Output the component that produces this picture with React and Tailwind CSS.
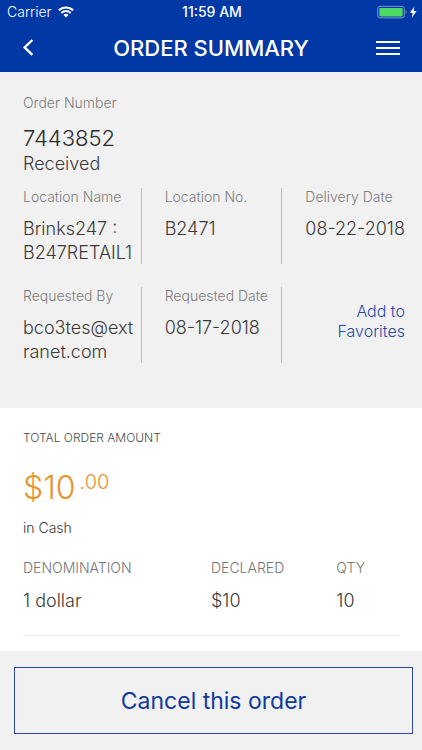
import React from "react";

function StatusBar() {
  return (
    <div className="grid h-6 grid-cols-3 items-center pl-[7px] pr-[5px] text-sm">
      <div className="flex items-center gap-1.5">
        <span className="font-light">Carrier</span>
        <svg width="16" height="12" viewBox="0 0 16 12" fill="none" stroke="currentColor" strokeWidth="2" aria-label="Wi-Fi">
          <path d="M0.8 4.4a10.2 10.2 0 0 1 14.4 0" />
          <path d="M3.3 7a6.7 6.7 0 0 1 9.4 0" />
          <path d="M8 11.6 5.5 9a3.6 3.6 0 0 1 5 0Z" fill="currentColor" stroke="none" />
        </svg>
      </div>
      <time className="whitespace-nowrap text-center font-medium">11:59 AM</time>
      <svg className="justify-self-end" width="40" height="14" viewBox="0 0 40 14" aria-label="Battery charging">
        <rect x="0.7" y="1.3" width="26.6" height="11.6" rx="2.4" fill="none" stroke="#7f9bd3" />
        <rect x="2.3" y="3" width="23.4" height="8.4" rx="0.8" fill="#4cd964" />
        <path d="M28.6 5.3v3.6c1.4-.5 1.4-3.1 0-3.6Z" fill="#7f9bd3" />
        <path d="M37.4 1.4 32.8 7.8h2.9l-1 5 5-6.8h-3.1Z" fill="#fff" />
      </svg>
    </div>
  );
}

function Header() {
  return (
    <header className="bg-[#0038a5] text-white">
      <StatusBar />
      <div className="flex h-12 items-center justify-between px-[14px]">
        <button type="button" aria-label="Back" className="flex h-10 w-10 items-center pl-2">
          <svg width="12" height="18" viewBox="0 0 12 18" fill="none" stroke="currentColor" strokeWidth="2.4">
            <path d="M10.4 1 2.6 8.4 10.4 15.8" />
          </svg>
        </button>
        <h1 className="text-[22px] font-medium leading-6">ORDER SUMMARY</h1>
        <button type="button" aria-label="Menu" className="flex h-10 w-10 items-center justify-center">
          <svg width="24" height="14" viewBox="0 0 24 14" fill="currentColor">
            <rect width="24" height="2" />
            <rect y="6" width="24" height="2" />
            <rect y="12" width="24" height="2" />
          </svg>
        </button>
      </div>
    </header>
  );
}

function Field({ label, children }) {
  return (
    <div className="h-[76px] border-l border-[#bdbdbd] pl-[23px] nth-[3n+1]:border-l-0">
      <dt className="whitespace-nowrap text-sm leading-[18px] text-[#7c7c7c]">{label}</dt>
      <dd className="mt-[11px] whitespace-nowrap text-lg leading-6">{children}</dd>
    </div>
  );
}

export default function App() {
  return (
    <div className="flex min-h-screen flex-col bg-white font-['Inter','Liberation_Sans',sans-serif] font-light text-[#3a3a3a]">
      <Header />

      <section className="bg-[#f1f1f1] pb-[45px] pt-[22px]">
        <div className="pl-[23px]">
          <p className="text-sm leading-[18px] text-[#7c7c7c]">Order Number</p>
          <p className="mt-3 text-[22px] leading-7 text-[#2b2b2b]">7443852</p>
          <p className="text-lg leading-6">Received</p>
        </div>
        <dl className="mt-3 grid grid-cols-3 gap-y-[23px]">
          <Field label="Location Name">
            Brinks247 :<br />B247RETAIL1
          </Field>
          <Field label="Location No.">B2471</Field>
          <Field label="Delivery Date">08-22-2018</Field>
          <Field label="Requested By">
            bco3tes@ext<br />ranet.com
          </Field>
          <Field label="Requested Date">08-17-2018</Field>
          <div className="border-l border-[#bdbdbd] pr-[17px] pt-[14px] text-right">
            <a href="#favorites" className="inline-block w-20 text-base leading-5 text-[#1f4aa8]">
              Add to Favorites
            </a>
          </div>
        </dl>
      </section>

      <section className="flex-1 px-[23px] pt-5">
        <h2 className="text-xs leading-5 text-[#4a4a4a]">TOTAL ORDER AMOUNT</h2>
        <p className="mt-5 flex items-start text-[#e8932e]">
          <span className="text-[32px] leading-10">$10</span>
          <span className="ml-1 text-xl leading-7">.00</span>
        </p>
        <p className="mt-2.5 text-sm leading-5">in Cash</p>
        <table className="mt-5 w-full table-fixed border-b border-[#ececec] text-left">
          <colgroup>
            <col className="w-1/2" />
            <col className="w-1/3" />
            <col />
          </colgroup>
          <thead>
            <tr className="text-sm leading-5 text-[#757575]">
              <th className="font-light">DENOMINATION</th>
              <th className="font-light">DECLARED</th>
              <th className="font-light">QTY</th>
            </tr>
          </thead>
          <tbody>
            <tr className="text-lg leading-6">
              <td className="pb-[22px] pt-[11px]">1 dollar</td>
              <td className="pb-[22px] pt-[11px]">$10</td>
              <td className="pb-[22px] pt-[11px]">10</td>
            </tr>
          </tbody>
        </table>
      </section>

      <footer className="bg-[#f1f1f1] pb-4 pl-[14px] pr-[9px] pt-4">
        <button type="button" className="h-[67px] w-full border border-[#2f49a8] text-[23px] font-normal leading-7 text-[#0f3a9c]">
          Cancel this order
        </button>
      </footer>
    </div>
  );
}
